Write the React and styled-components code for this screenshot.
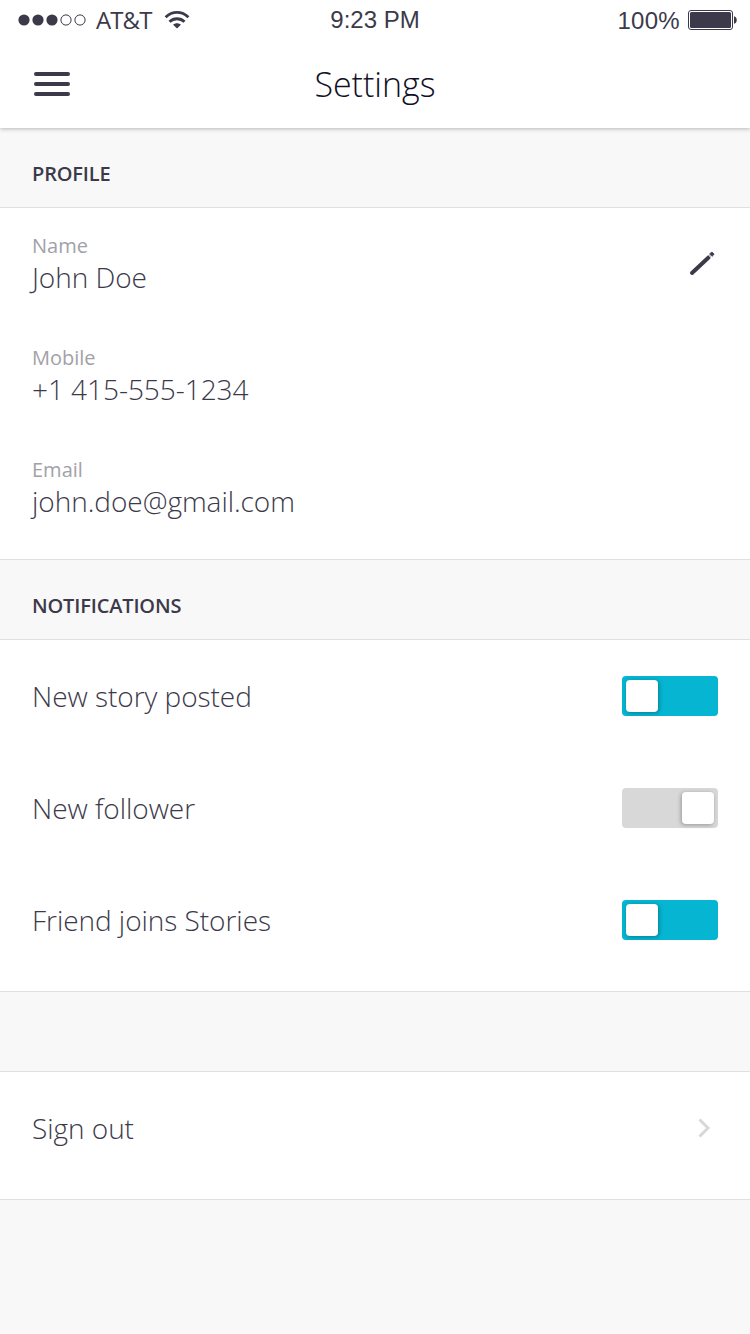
import React from "react";
import styled, { createGlobalStyle } from "styled-components";

const ink = "#3c3a4a";

const GlobalStyle = createGlobalStyle`
  body { margin: 0; background: #f8f8f8; }
  * { box-sizing: border-box; }
`;

const Screen = styled.div`
  display: flex;
  flex-direction: column;
  width: 750px;
  height: 1334px;
  overflow: hidden;
  background: #f8f8f8;
  color: ${ink};
  font-family: "Open Sans", sans-serif;
  font-weight: 300;
`;

const Header = styled.header`
  position: relative;
  height: 128px;
  background: #fff;
  box-shadow: 0 1px 4px rgba(60, 58, 74, 0.35);
`;

const StatusBar = styled.div`
  display: grid;
  grid-template-columns: 1fr auto 1fr;
  height: 40px;
  padding: 0 13px;
  font: 400 24px/40px "Liberation Sans", sans-serif;
`;

const StatusGroup = styled.div`
  display: flex;
  align-items: center;
  justify-content: ${(p) => (p.$end ? "flex-end" : "flex-start")};
  height: 40px;
  padding-left: 5px;
  svg { display: block; flex: none; }
`;

const Carrier = styled.span`
  margin: 0 12px 1px 10px;
  font-family: "Open Sans", sans-serif;
  font-size: 24px;
  line-height: 38px;
  letter-spacing: -0.9px;
`;

const Battery = styled.span`
  margin: 2px 8px 0 0;
  line-height: 38px;
  letter-spacing: 0.3px;
`;

const NavBar = styled.div`
  display: grid;
  grid-template-columns: 100px 1fr 100px;
  align-items: center;
  height: 88px;
  padding: 0 34px;
`;

const MenuButton = styled.button`
  display: flex;
  flex-direction: column;
  gap: 6px;
  width: 36px;
  padding: 0;
  border: 0;
  background: none;
`;

const MenuBar = styled.span`
  height: 4px;
  border-radius: 2px;
  background: ${ink};
`;

const Title = styled.h1`
  margin: 0;
  color: #120f26;
  font-size: 34px;
  font-weight: 300;
  line-height: 48px;
  text-align: center;
`;

const SectionHeader = styled.h2`
  height: 80px;
  margin: 0;
  padding: 32px 32px 0;
  border-bottom: 1px solid #e0e0e1;
  font-size: 20px;
  font-weight: 600;
  line-height: 28px;
  letter-spacing: -0.15px;
`;

const Panel = styled.section`
  display: flex;
  flex-direction: column;
  height: ${(p) => p.$height}px;
  padding: ${(p) => p.$top || 0}px 32px 0;
  background: #fff;
  border-bottom: 1px solid #e0e0e1;
`;

const Row = styled.div`
  display: flex;
  flex: none;
  align-items: flex-start;
  justify-content: space-between;
  height: 112px;
`;

const FieldLabel = styled.div`
  color: #a2a1a8;
  font-size: 20px;
  font-weight: 400;
  line-height: 28px;
`;

const Value = styled.div`
  font-size: 28px;
  line-height: ${(p) => (p.$field ? 34 : 40)}px;
  letter-spacing: -0.04px;
`;

const EditButton = styled.button`
  margin: 17px 2px 0 0;
  padding: 0;
  border: 0;
  background: none;
  svg { display: block; }
`;

const Track = styled.div`
  display: flex;
  justify-content: ${(p) => (p.$on ? "flex-start" : "flex-end")};
  width: 96px;
  height: 40px;
  padding: 4px;
  border-radius: 4px;
  background: ${(p) => (p.$on ? "#05b5d1" : "#d8d8d8")};
`;

const Thumb = styled.span`
  width: 32px;
  height: 32px;
  border-radius: 4px;
  background: #fff;
  box-shadow: ${(p) => (p.$on ? "1px" : "-1px")} 1px 4px rgba(0, 0, 0, 0.3);
`;

const Spacer = styled.div`
  height: 80px;
  border-bottom: 1px solid #e0e0e1;
`;

const Chevron = styled.svg`
  display: block;
  margin: 10px 4px 0 0;
`;

const fields = [
  ["Name", "John Doe"],
  ["Mobile", "+1 415-555-1234"],
  ["Email", "john.doe@gmail.com"],
];

const toggles = [
  ["New story posted", true],
  ["New follower", false],
  ["Friend joins Stories", true],
];

function Signal() {
  return (
    <svg width="68" height="12" fill={ink}>
      {[6, 20, 34].map((x) => <circle key={x} cx={x} cy="6" r="5.6" />)}
      {[48, 62].map((x) => (
        <circle key={x} cx={x} cy="6" r="5.1" fill="none" stroke={ink} />
      ))}
    </svg>
  );
}

function Wifi() {
  return (
    <svg width="26" height="20" viewBox="0 0 26 20" fill="none" stroke={ink} strokeWidth="2.8">
      <path d="M1.6 7.3C8.2 0.8 17.8 0.8 24.4 7.3" />
      <path d="M5.5 11.8C9.8 7.7 16.2 7.7 20.5 11.8" />
      <path d="M13 18.4 9.1 14.7C11.4 12.7 14.6 12.7 16.9 14.7Z" fill={ink} stroke="none" />
    </svg>
  );
}

export default function App() {
  return (
    <Screen>
      <GlobalStyle />
      <Header>
        <StatusBar>
          <StatusGroup>
            <Signal />
            <Carrier>AT&amp;T</Carrier>
            <Wifi />
          </StatusGroup>
          <span>9:23 PM</span>
          <StatusGroup $end>
            <Battery>100%</Battery>
            <svg width="49" height="20" fill={ink}>
              <rect x="0.5" y="0.5" width="44" height="19" rx="2.5" fill="none" stroke={ink} />
              <rect x="2" y="2" width="41" height="16" rx="1.5" />
              <path d="M46 6.2C49.7 7 49.7 13 46 13.8Z" />
            </svg>
          </StatusGroup>
        </StatusBar>
        <NavBar>
          <MenuButton aria-label="Menu"><MenuBar /><MenuBar /><MenuBar /></MenuButton>
          <Title>Settings</Title>
        </NavBar>
      </Header>
      <SectionHeader>PROFILE</SectionHeader>
      <Panel $height={352} $top={24}>
        {fields.map(([label, value], i) => (
          <Row key={label}>
            <div>
              <FieldLabel>{label}</FieldLabel>
              <Value $field>{value}</Value>
            </div>
            {i === 0 && (
              <EditButton aria-label="Edit profile">
                <svg width="28" height="28" fill="none" stroke={ink}>
                  <path d="M4 24 20.8 8.2" strokeWidth="4" strokeLinecap="round" />
                  <path d="M19.4 4.8 23.6 9.2" stroke="#fff" strokeWidth="1" />
                  <path d="M21.6 5 23.2 3.5Q24 2.9 24.7 3.6L25.6 4.6Q26.2 5.3 25.5 6L24.2 7.3Z" fill={ink} strokeWidth="0.8" />
                </svg>
              </EditButton>
            )}
          </Row>
        ))}
      </Panel>
      <SectionHeader>NOTIFICATIONS</SectionHeader>
      <Panel $height={352} $top={36}>
        {toggles.map(([label, on]) => (
          <Row key={label}>
            <Value>{label}</Value>
            <Track $on={on} role="switch" aria-checked={on}><Thumb $on={on} /></Track>
          </Row>
        ))}
      </Panel>
      <Spacer />
      <Panel $height={128} $top={36}>
        <Row>
          <Value>Sign out</Value>
          <Chevron width="16" height="20" fill="none" stroke="#d8d8dc" strokeWidth="3">
            <path d="M1.5 1.5 10 10 1.5 18.5" />
          </Chevron>
        </Row>
      </Panel>
    </Screen>
  );
}
